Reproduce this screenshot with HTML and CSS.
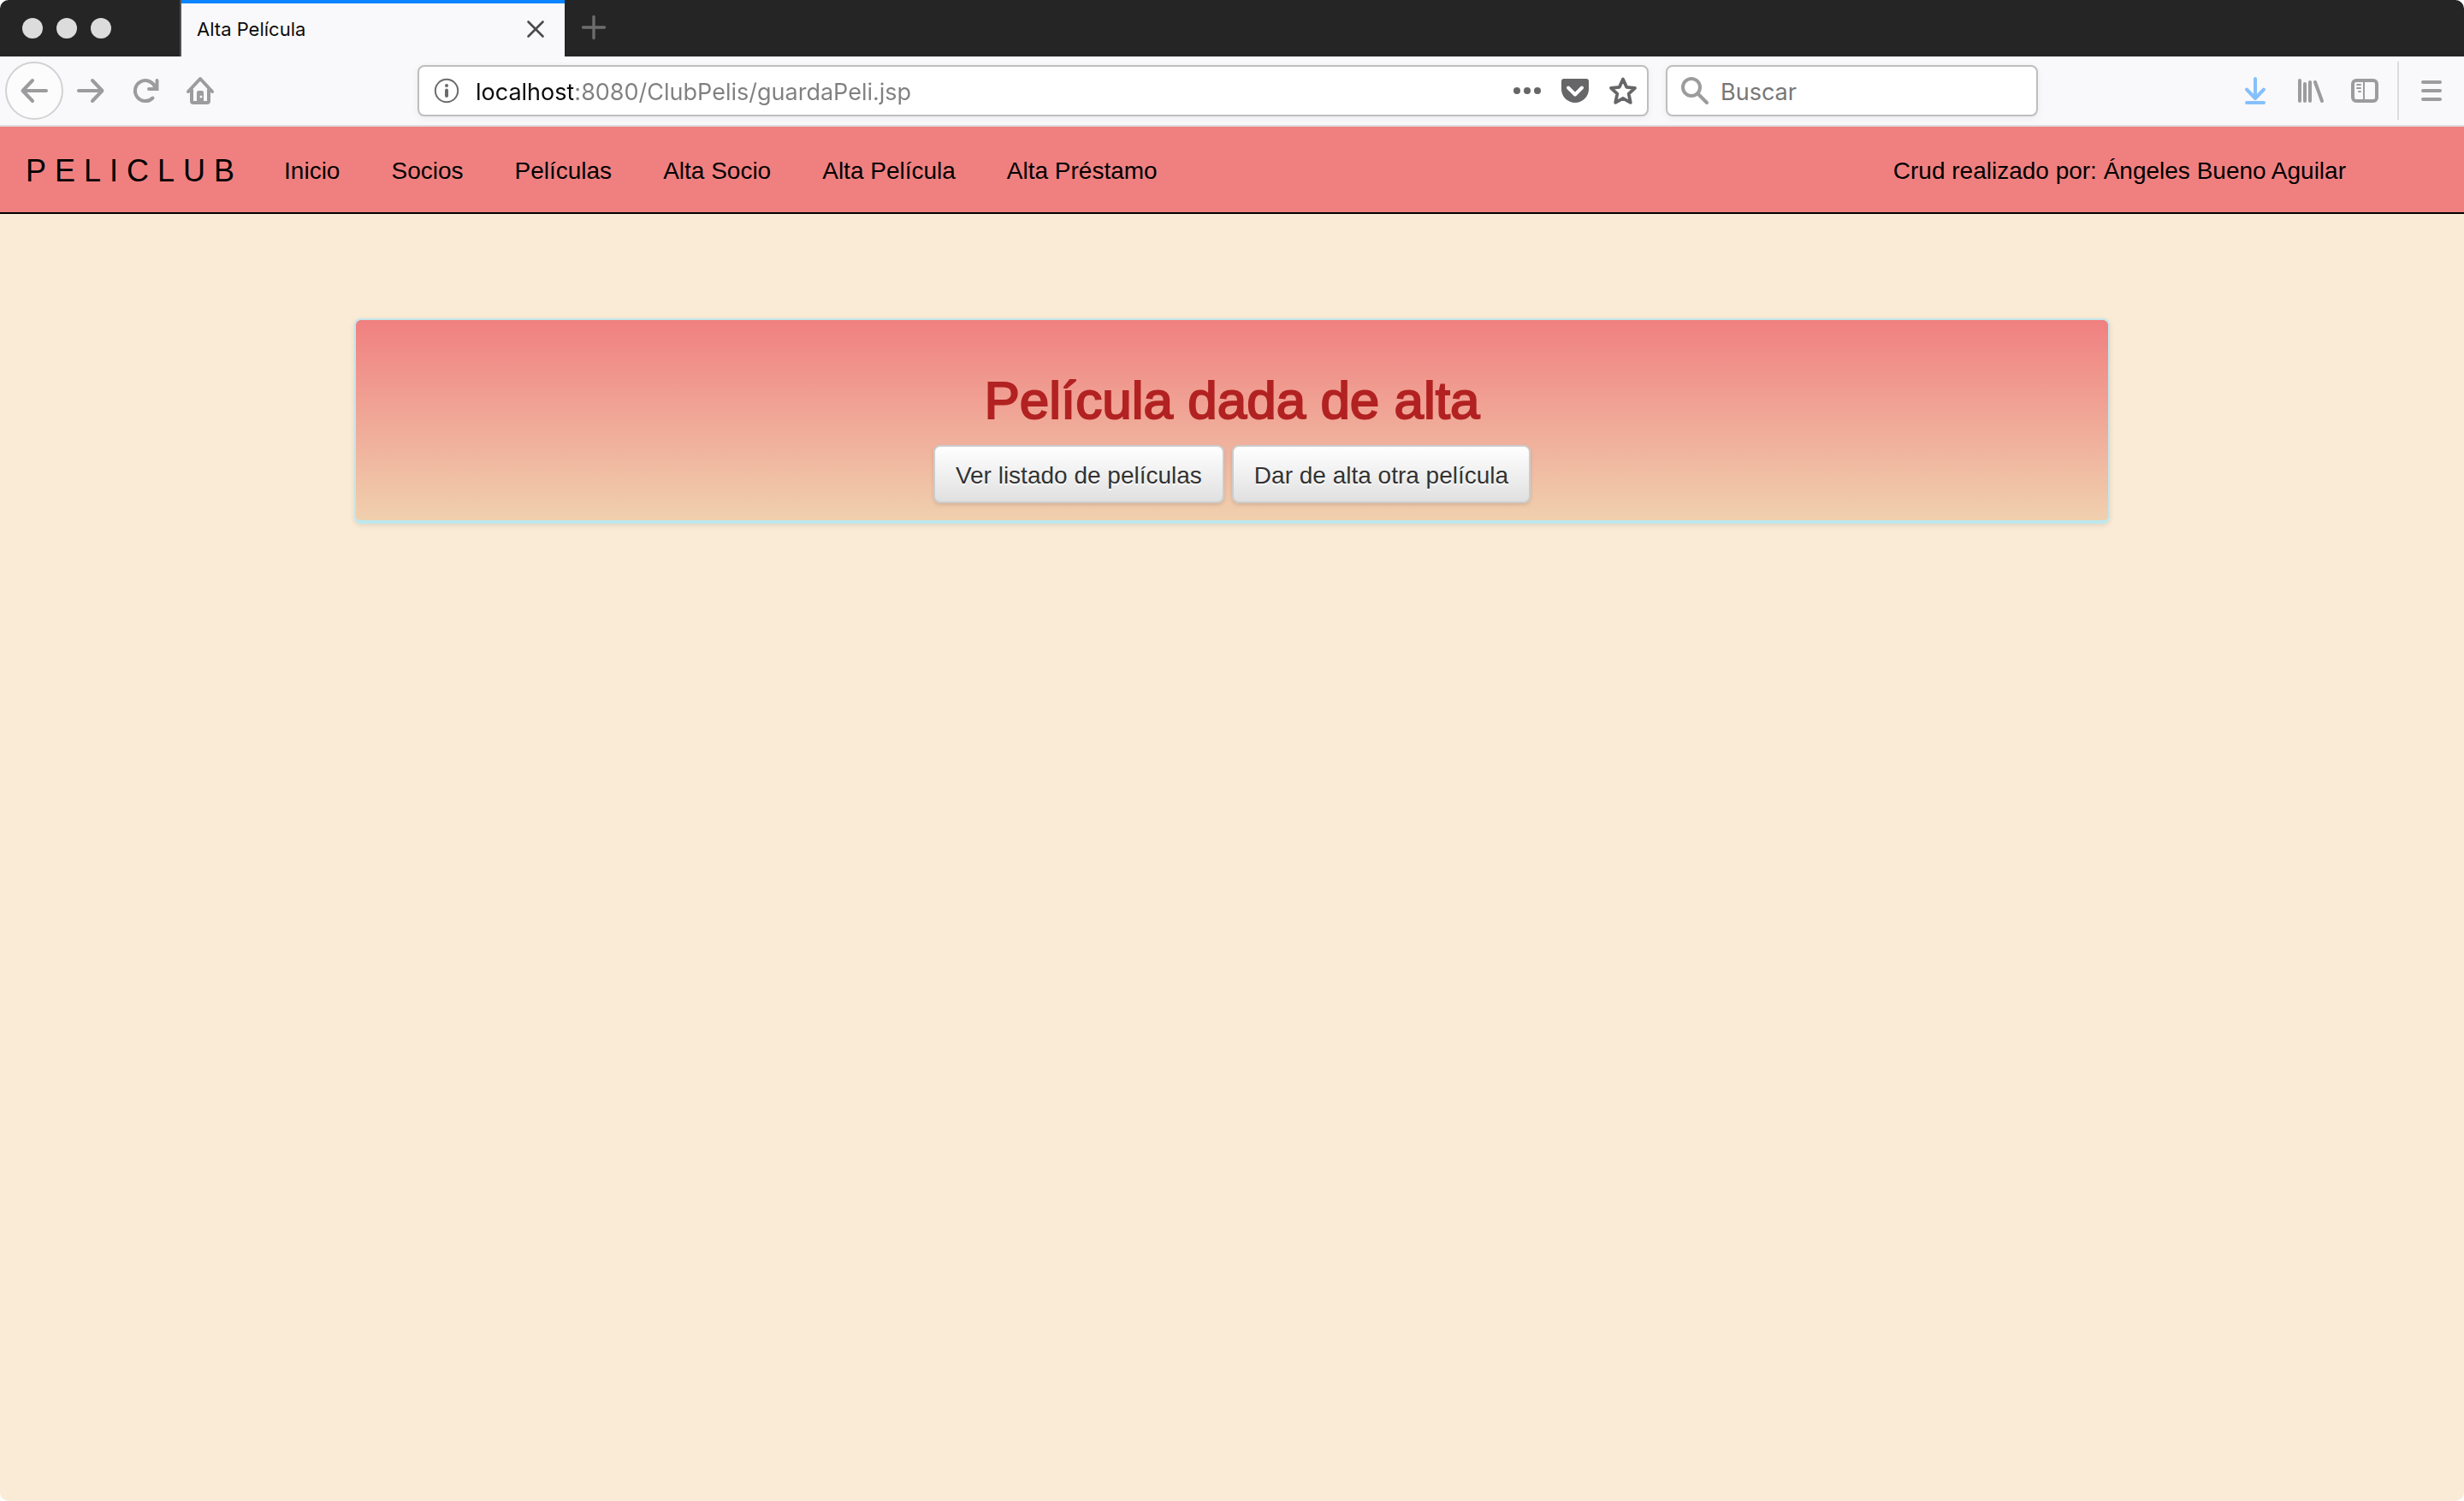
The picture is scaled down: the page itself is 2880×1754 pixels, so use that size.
FILE: index.html
```html
<!DOCTYPE html>
<html lang="es">
<head>
<meta charset="utf-8">
<title>Alta Película</title>
<link rel="stylesheet" href="styles.css">
</head>
<body>
<div class="window">
  <header class="tabbar">
    <div class="lights"><span class="light"></span><span class="light"></span><span class="light"></span></div>
    <div class="tab">
      <span class="tab-title">Alta Película</span>
      <button class="tab-close" type="button" aria-label="Cerrar pestaña">
        <svg width="20" height="20" viewBox="0 0 20 20"><path d="M1.500 1.500 18.500 18.500M18.500 1.500 1.500 18.500" fill="none" stroke="#4a4a4c" stroke-width="2.600" stroke-linecap="round"/></svg>
      </button>
    </div>
    <button class="tab-new" type="button" aria-label="Nueva pestaña">
      <svg width="28" height="28" viewBox="0 0 28 28"><path d="M14 1.500V26.500M1.500 14H26.500" fill="none" stroke="#6c6c6c" stroke-width="3.400" stroke-linecap="round"/></svg>
    </button>
  </header>

  <div class="toolbar">
    <div class="tools tools-left">
      <button class="tool tool-back" type="button" aria-label="Atrás">
        <svg width="32" height="32" viewBox="0 0 32 32"><path d="M30 16H3M14 4 2.500 16 14 28" fill="none" stroke="#9c9c9e" stroke-width="4" stroke-linecap="round" stroke-linejoin="round"/></svg>
      </button>
      <button class="tool" type="button" aria-label="Adelante">
        <svg width="32" height="32" viewBox="0 0 32 32"><path d="M2 16H29M18 4 29.500 16 18 28" fill="none" stroke="#9c9c9e" stroke-width="4" stroke-linecap="round" stroke-linejoin="round"/></svg>
      </button>
      <button class="tool" type="button" aria-label="Recargar">
        <svg width="32" height="32" viewBox="0 0 32 32"><path d="M24.500 24.500A12 12 0 1 1 27 11.500M29.500 4V14H20" fill="none" stroke="#9c9c9e" stroke-width="4" stroke-linecap="round"/></svg>
      </button>
      <button class="tool" type="button" aria-label="Inicio del navegador">
        <svg width="32" height="32" viewBox="0 0 32 32"><path d="M2 17 16 2 30 17M6 15V28a2 2 0 0 0 2 2H24a2 2 0 0 0 2-2V15" fill="none" stroke="#9c9c9e" stroke-width="4" stroke-linecap="round" stroke-linejoin="round"/><path d="M12 30V18a2 2 0 0 1 2-2h4a2 2 0 0 1 2 2V30Z" fill="#9c9c9e"/><circle cx="17" cy="23" r="1.500" fill="#f9f9fb"/></svg>
      </button>
    </div>

    <div class="field field-url">
      <svg width="32" height="32" viewBox="0 0 32 32"><circle cx="16" cy="16" r="13.200" fill="none" stroke="#6b6b6d" stroke-width="2"/><circle cx="16" cy="10" r="2" fill="#6b6b6d"/><path d="M16 15.500V22" stroke="#6b6b6d" stroke-width="4" stroke-linecap="round"/></svg>
      <input class="url-input" type="text" aria-label="Dirección" value="localhost:8080/ClubPelis/guardaPeli.jsp">
      <div class="url-actions">
        <svg width="32" height="32" viewBox="0 0 32 32"><g fill="#666668"><circle cx="4" cy="16" r="4"/><circle cx="16" cy="16" r="4"/><circle cx="28" cy="16" r="4"/></g></svg>
        <svg width="32" height="32" viewBox="0 0 32 32"><path d="M3 2H29a3 3 0 0 1 3 3V14a16 16 0 0 1-32 0V5a3 3 0 0 1 3-3Z" fill="#666668"/><path d="M8 12.500 16 20.500 24 12.500" fill="none" stroke="#fff" stroke-width="4" stroke-linecap="round" stroke-linejoin="round"/></svg>
        <svg width="32" height="32" viewBox="0 0 32 32"><path d="M16 2.500 20.200 11.800 30 12.800 22.700 19.600 24.800 29.800 16 24.800 7.200 29.800 9.300 19.600 2 12.800 11.800 11.800Z" fill="none" stroke="#666668" stroke-width="3.800" stroke-linejoin="round"/></svg>
      </div>
    </div>

    <div class="field field-search">
      <svg width="32" height="32" viewBox="0 0 32 32"><circle cx="12" cy="12" r="10" fill="none" stroke="#9c9c9e" stroke-width="4"/><path d="M20 20 30 30" stroke="#9c9c9e" stroke-width="4" stroke-linecap="round"/></svg>
      <input class="search-input" type="text" aria-label="Buscar" placeholder="Buscar">
    </div>

    <div class="tools tools-right">
      <button class="tool" type="button" aria-label="Descargas">
        <svg width="32" height="32" viewBox="0 0 32 32"><path d="M16 2V25M6 14.500 16 25 26 14.500M6 30H26" fill="none" stroke="#86c0fb" stroke-width="4" stroke-linecap="round" stroke-linejoin="round"/></svg>
      </button>
      <button class="tool" type="button" aria-label="Biblioteca">
        <svg width="32" height="32" viewBox="0 0 32 32"><path d="M4 4V28M10 8V28M16 6V28M22 6 30 28" fill="none" stroke="#9c9c9e" stroke-width="4" stroke-linecap="round"/></svg>
      </button>
      <button class="tool" type="button" aria-label="Barra lateral">
        <svg width="32" height="32" viewBox="0 0 32 32"><rect x="2" y="4" width="28" height="24" rx="4" fill="none" stroke="#9c9c9e" stroke-width="4"/><path d="M15 5V27M7 9H11M7 13H11M9 17H11" fill="none" stroke="#9c9c9e" stroke-width="2" stroke-linecap="round"/></svg>
      </button>
      <span class="tool-divider"></span>
      <button class="tool" type="button" aria-label="Menú">
        <svg width="32" height="32" viewBox="0 0 32 32"><path d="M6 6H26M6 16H26M6 26H26" fill="none" stroke="#9c9c9e" stroke-width="4" stroke-linecap="round"/></svg>
      </button>
    </div>
  </div>

  <nav class="navbar">
    <a class="brand" href="#">PELICLUB</a>
    <a class="nav-link" href="#">Inicio</a>
    <a class="nav-link" href="#">Socios</a>
    <a class="nav-link" href="#">Películas</a>
    <a class="nav-link" href="#">Alta Socio</a>
    <a class="nav-link" href="#">Alta Película</a>
    <a class="nav-link" href="#">Alta Préstamo</a>
    <span class="credit">Crud realizado por: Ángeles Bueno Aguilar</span>
  </nav>

  <main class="page">
    <section class="card">
      <h1 class="card-title">Película dada de alta</h1>
      <div class="card-actions">
        <button class="btn" type="button">Ver listado de películas</button>
        <button class="btn" type="button">Dar de alta otra película</button>
      </div>
    </section>
  </main>
</div>
</body>
</html>
```
FILE: styles.css
```css
* { box-sizing: border-box; }

body {
  margin: 0;
  background: #fff;
  font-family: "Liberation Sans", Arial, sans-serif;
  font-size: 28px;
  line-height: 40px;
  color: #000;
}

button { margin: 0; font: inherit; }
svg { display: block; flex: none; overflow: visible; }

.window {
  display: flex;
  flex-direction: column;
  min-height: 100vh;
  overflow: hidden;
  border-radius: 10px;
  background: #faebd7;
}

/* Tab strip */
.tabbar { display: flex; height: 66px; background: #252525; }
.lights {
  display: flex;
  align-items: center;
  gap: 16px;
  width: 212px;
  padding-left: 26px;
  border-right: 2px solid #505052;
}
.light { width: 24px; height: 24px; border-radius: 50%; background: #dcdcdc; }
.tab {
  display: flex;
  align-items: center;
  justify-content: space-between;
  width: 448px;
  padding: 0 24px 2px 18px;
  border-top: 4px solid #0a84ff;
  background: #f9f9fb;
}
.tab-title { font: 22px/32px Inter, sans-serif; color: #0c0c0d; }
.tab-close, .tab-new, .tool {
  display: flex;
  align-items: center;
  justify-content: center;
  padding: 0;
  border: 0;
  background: none;
}
.tab-new { width: 68px; padding-bottom: 2px; }

/* Navigation toolbar */
.toolbar {
  display: flex;
  align-items: center;
  height: 82px;
  padding: 0 6px;
  border-bottom: 2px solid #dedee0;
  background: #f9f9fb;
}
.tools { display: flex; align-items: center; }
.tools-left { width: 482px; }
.tools-right { margin-left: auto; }
.tool { width: 64px; height: 68px; }
.tool-back {
  width: 68px;
  border: 2px solid #d2d2d4;
  border-radius: 50%;
  background: #fcfcfd;
}
.tool-divider { width: 2px; height: 68px; margin: 0 6px; background: #dcdcde; }
.field {
  display: flex;
  align-items: center;
  min-width: 0;
  height: 60px;
  border: 2px solid #bebebf;
  border-radius: 8px;
  background: #fff;
  box-shadow: 0 2px 8px rgba(0, 0, 0, 0.06);
}
.field input {
  flex: 1;
  min-width: 0;
  height: 42px;
  padding: 2px 0 0;
  border: 0;
  outline: 0;
  background-color: transparent;
  font: 27px/40px Inter, sans-serif;
}
.field-url { flex: 0 1 1439px; gap: 18px; padding: 0 12px 0 16px; }
.field-url .url-input {
  background: linear-gradient(to right, #0c0c0d 114px, #808080 114px);
  background-clip: text;
  -webkit-background-clip: text;
  -webkit-text-fill-color: transparent;
}
.url-actions { display: flex; gap: 24px; }
.field-search { flex: 0 1 435px; gap: 14px; margin-left: 20px; padding: 0 16px; }
.search-input::placeholder { color: #777; opacity: 1; }

/* Site navigation */
.navbar {
  display: flex;
  align-items: center;
  gap: 60px;
  height: 102px;
  padding: 4px 138px 0 30px;
  border-bottom: 2px solid #000;
  background: #f08080;
}
.navbar a { color: #000; text-decoration: none; }
.navbar .brand { margin-right: -12px; font-size: 36px; letter-spacing: 10px; }
.credit { margin-left: auto; }

/* Content */
.page { padding: 122px 40px; }
.card {
  max-width: 2052px;
  margin: 0 auto;
  padding: 54px 40px 20px;
  border: 2px solid #c4e6ea;
  border-bottom: 4px solid #bde8ee;
  border-radius: 8px;
  background: linear-gradient(#f08080, #f0d0ae);
  box-shadow: 0 2px 6px rgba(0, 0, 0, 0.1);
  text-align: center;
}
.card-title {
  margin: 0 0 12px;
  font-size: 62px;
  font-weight: 400;
  line-height: 80px;
  color: #b22222;
  -webkit-text-stroke: 2px #b22222;
}
.card-actions { display: flex; justify-content: center; gap: 9px; }
.btn {
  padding: 14px 24px 10px;
  border: 2px solid #ccc;
  border-radius: 8px;
  background: linear-gradient(#fff, #e0e0e0);
  box-shadow: 0 2px 4px rgba(0, 0, 0, 0.12);
  color: #333;
  text-shadow: 0 2px 0 #fff;
}
```
